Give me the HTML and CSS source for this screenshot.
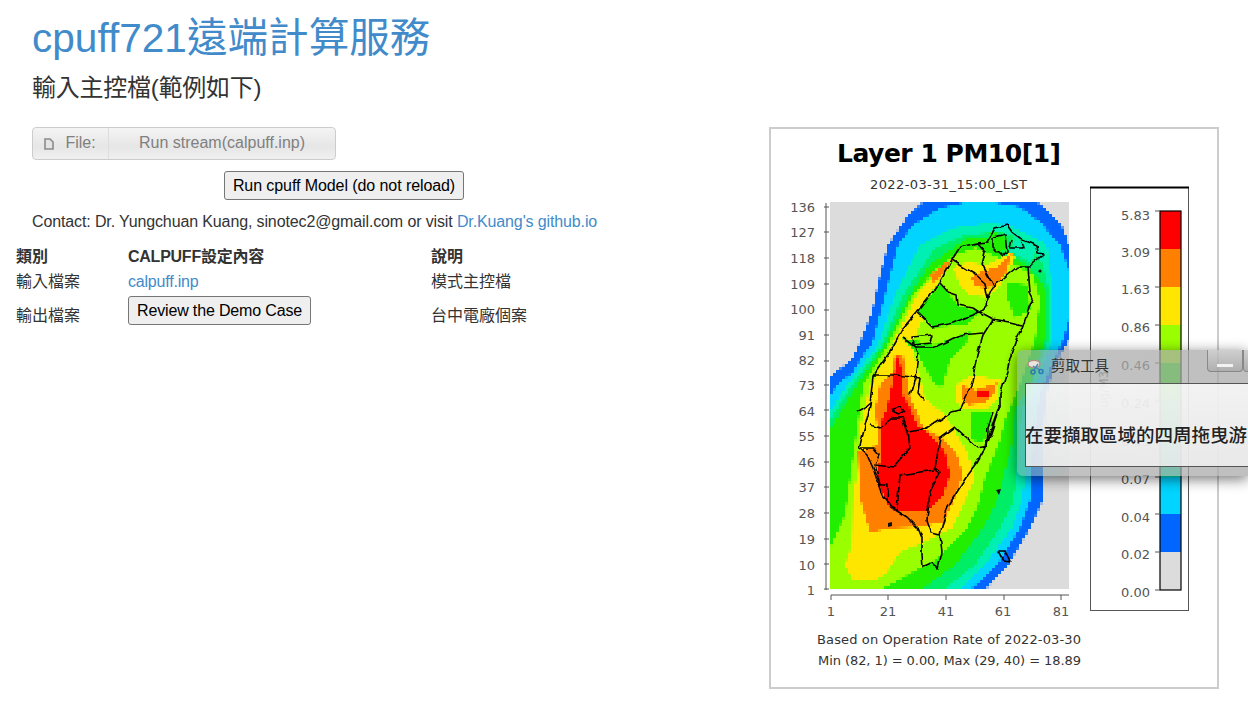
FILE: index.html
```html
<!DOCTYPE html>
<html>

<head>
    <meta charset="utf-8">
    <title>cpuff721遠端計算服務</title>
    <link rel="stylesheet" href="styles.css">
</head>

<body>
    <header class="head">
        <h1>cpuff721遠端計算服務</h1>
        <h2>輸入主控檔(範例如下)</h2>
    </header>

    <main class="content">
        <section class="left">
            <form class="upload">
                <div class="filebox">
                    <span class="filebox-label">
                        <svg class="file-icon" viewBox="0 0 10 12" width="10" height="12">
                            <path d="M1 1h5l3 3v7H1z" fill="#e4e4e4" stroke="#8a8a8a" stroke-width="1.6" />
                        </svg>
                        File:
                    </span>
                    <span class="filebox-name">Run stream(calpuff.inp)</span>
                </div>
                <div class="run-row">
                    <button type="button" class="btn">Run cpuff Model (do not reload)</button>
                </div>
            </form>
            <p class="contact">Contact: Dr. Yungchuan Kuang, sinotec2@gmail.com or visit <a href="#">Dr.Kuang's github.io</a></p>
            <table class="settings">
                <tr>
                    <th class="col-a">類別</th>
                    <th class="col-b">CALPUFF設定內容</th>
                    <th>說明</th>
                </tr>
                <tr>
                    <td>輸入檔案</td>
                    <td><a href="#">calpuff.inp</a></td>
                    <td>模式主控檔</td>
                </tr>
                <tr class="row-btn">
                    <td>輸出檔案</td>
                    <td class="btn-cell"><button type="button" class="btn">Review the Demo Case</button></td>
                    <td>台中電廠個案</td>
                </tr>
            </table>
        </section>

        <figure class="plot">
            <svg class="plot-svg" viewBox="771 129 446 558" width="446" height="558">
                <defs>
                    <!-- samples the bands on the model grid, about 3px a cell -->
                    <filter id="cells" filterUnits="userSpaceOnUse" x="830" y="202" width="239" height="388" color-interpolation-filters="sRGB">
                        <feFlood x="831" y="203" width="1" height="1" />
                        <feComposite x="830" y="202" width="3" height="3" />
                        <feTile x="830" y="202" width="239" height="388" result="grid" />
                        <feComposite in="SourceGraphic" in2="grid" operator="in" />
                        <feMorphology operator="dilate" radius="1" />
                        <feGaussianBlur stdDeviation="0.35" />
                    </filter>
                    <filter id="wiggle" filterUnits="userSpaceOnUse" x="830" y="202" width="239" height="388" color-interpolation-filters="sRGB">
                        <feTurbulence type="fractalNoise" baseFrequency="0.1" numOctaves="2" seed="4" />
                        <feDisplacementMap in="SourceGraphic" scale="5" xChannelSelector="R" yChannelSelector="G" />
                        <feGaussianBlur stdDeviation="0.2" />
                    </filter>
                </defs>

                <text class="t-title" x="837" y="162" textLength="224">Layer 1 PM10[1]</text>
                <text class="t-sub" x="870" y="189" textLength="157">2022-03-31_15:00_LST</text>

                <!-- contour bands, outer to inner -->
                <g class="bands" filter="url(#cells)">
                    <rect x="830" y="202" width="239" height="388" fill="#dcdcdc" />
                    <polygon fill="#0066ff" points="923,202 1037,202 1053,216 1063,228 1069,245 1069,340 1055,365 1046,395 1043,440 1043,478 1042,502 1030,528 1008,565 985,590 830,590 830,377 853,358 863,335 872,312 880,275 888,245 907,217" />
                    <polygon fill="#00d4ff" points="968,202 990,202 1020,207 1040,222 1060,245 1069,270 1069,320 1063,340 1050,368 1040,395 1033,440 1030,478 1030,500 1020,528 997,565 970,590 830,590 830,397 837,385 853,372 863,355 872,345 877,325 885,295 892,268 898,245 913,225 940,208" />
                    <polygon fill="#00f0b4" points="990,223 1010,226 1033,237 1047,245 1053,295 1053,338 1040,375 1030,400 1024,440 1025,478 1022,500 1012,528 985,565 960,590 830,590 830,412 847,385 878,345 895,295 920,245 953,228" />
                    <polygon fill="#00ee66" points="1000,232 1025,240 1042,262 1050,295 1049,338 1035,375 1022,410 1018,440 1017,478 1012,505 1000,528 975,565 943,590 830,590 830,420 852,385 882,345 903,295 935,248 965,235" />
                    <polygon fill="#22ee00" points="1040,280 1047,295 1045,338 1030,385 1015,410 1013,440 1003,478 995,505 983,528 955,565 920,590 830,590 830,430 857,385 885,345 910,295 930,265 950,250 970,237 990,238 1003,255 1022,262" />
                    <polygon fill="#99ff00" points="955,255 975,248 1010,262 1033,275 1040,300 1035,340 1020,385 1005,420 1000,440 985,478 978,505 967,528 935,560 880,590 830,590 830,548 845,515 850,478 857,428 863,385 888,345 913,295 935,270" />
                    <polygon fill="#ffe600" points="947,262 952,260 935,290 922,320 912,345 918,370 925,398 945,415 953,428 967,452 975,478 960,512 952,528 925,542 900,552 887,572 877,580 853,580 845,565 852,545 853,495 858,470 860,428 870,385 892,345 917,295" />
                    <polygon fill="#ffe600" points="953,268 967,262 987,265 1012,252 1015,258 1000,285 987,297 970,295 960,285" />
                    <polygon fill="#ffe600" points="955,385 973,375 1000,380 997,400 985,410 965,410 955,400" />
                    <polygon fill="#ff8000" points="903,355 895,355 892,372 880,385 875,410 877,425 878,445 858,452 860,498 870,532 895,528 917,527 943,522 953,502 963,475 957,455 943,438 923,428 917,412 910,398" />
                    <polygon fill="#ff8000" points="971,278 980,272 997,267 1012,253 1005,275 993,287 983,288 975,285" />
                    <polygon fill="#ff8000" points="962,385 975,390 997,383 993,395 985,403 968,405 962,398" />
                    <polygon fill="#ff8000" points="930,275 947,262 952,260 940,278 933,282" />
                    <polygon fill="#ff0000" points="898,355 892,385 887,408 880,425 880,462 877,472 878,485 890,508 897,511 927,511 943,495 950,475 945,452 930,435 917,425 910,408 903,395 902,372" />
                    <polygon fill="#ff0000" points="976,390 990,390 990,398 978,398" />
                    <!-- green patches over the island -->
                    <polygon fill="#22ee00" points="940,282 958,305 980,312 967,325 933,327 917,312" />
                    <polygon fill="#22ee00" points="903,338 935,345 970,332 968,340 950,360 942,387 935,385 918,355" />
                    <polygon fill="#22ee00" points="1008,283 1028,285 1030,310 1015,318 1008,300" />
                    <polygon fill="#22ee00" points="990,232 1005,235 1008,252 990,248" />
                    <polygon fill="#00f0b4" points="1015,238 1040,248 1030,262 1010,252" />
                    <polygon fill="#22ee00" points="972,413 992,413 990,430 982,442 972,440" />
                </g>

                <!-- coast and county lines -->
                <g class="coast" filter="url(#wiggle)">
                    <polyline points="990,237 995,228 1007,225 1012,232 1020,238 1037,245 1038,253 1044,254 1033,263 1028,268 1030,292 1033,298 1028,310 1022,328 1017,338 1010,358 1007,372 1000,395 1000,405 990,432 983,452 977,463 968,475 957,492 947,508 940,535 942,552 938,569 932,563 923,567 922,555 922,538 918,528 907,517 892,508 882,495 873,468 867,455 859,448 862,438 868,415 870,405 873,375 892,348 903,328 917,312 940,282 953,258 960,247 977,243 987,242 990,237" />
                    <polyline points="952,260 960,265 975,274 985,283 987,295 988,298 993,287 1017,267 1028,267" />
                    <polyline points="982,265 985,252 977,243" />
                    <polyline points="982,265 993,285" />
                    <polyline points="940,283 948,292 957,295 958,305 973,308 979,312" />
                    <polyline points="917,312 933,327 953,323 967,317 980,312 993,319 1010,322 1022,325" />
                    <polyline points="988,297 987,305 980,312" />
                    <polyline points="993,319 983,335 977,355 972,382 967,395 960,410 952,412" />
                    <polyline points="903,338 915,347 935,347 960,335 983,333" />
                    <polyline points="915,347 918,355 915,378 910,395" />
                    <polygon points="912,337 932,335 930,342 913,344" />
                    <polyline points="873,375 897,375 920,378" />
                    <polyline points="870,425 880,428 892,418 903,418 908,432 920,430 935,423 952,412" />
                    <polyline points="940,438 955,427 967,438 977,447 988,445" />
                    <polyline points="940,438 935,468 940,472 930,492 927,520 932,533 940,535" />
                    <polyline points="908,432 910,448 893,467 875,465" />
                    <polyline points="935,470 920,472 900,475 897,510" />
                    <polyline points="860,448 873,448 879,455 875,465 880,485 888,485 887,502 892,508" />
                    <polyline points="993,413 988,428 987,445 996,418 1000,405" />
                    <polyline points="993,238 993,247 1003,257 1007,252 1005,235 998,237 993,238" />
                    <polyline points="1012,240 1010,248 1023,248 1021,241" />
                    <polyline points="920,378 918,392 925,400" />
                    <polygon points="893,408 900,406 904,411 899,414 893,412" />
                    <polyline points="857,412 864,408 870,403" />
                    <polygon points="999,551 1005,551 1010,561 1004,560" />
                </g>
                <g class="isles">
                    <circle cx="1040" cy="271" r="1.6" />
                    <path d="M996 490l5-1-2 6z" />
                    <path d="M888 523l4-1v4l-4 1z" />
                </g>

                <!-- axes -->
                <g class="axis">
                    <path d="M826 203V590M824 207h5M824 232h5M824 258h5M824 284h5M824 310h5M824 335h5M824 361h5M824 385h5M824 410h5M824 436h5M824 462h5M824 487h5M824 513h5M824 539h5M824 564h5M824 589h5" />
                    <path d="M831 595H1069M831 595v5M888 595v5M946 595v5M1004 595v5M1061 595v5" />
                </g>
                <g class="t-left">
                    <text x="815" y="212">136</text>
                    <text x="815" y="237">127</text>
                    <text x="815" y="263">118</text>
                    <text x="815" y="289">109</text>
                    <text x="815" y="314">100</text>
                    <text x="815" y="340">91</text>
                    <text x="815" y="365">82</text>
                    <text x="815" y="390">73</text>
                    <text x="815" y="416">64</text>
                    <text x="815" y="441">55</text>
                    <text x="815" y="467">46</text>
                    <text x="815" y="492">37</text>
                    <text x="815" y="518">28</text>
                    <text x="815" y="544">19</text>
                    <text x="815" y="570">10</text>
                    <text x="815" y="595">1</text>
                </g>
                <g class="t-mid">
                    <text x="831" y="616">1</text>
                    <text x="888" y="616">21</text>
                    <text x="946" y="616">41</text>
                    <text x="1003" y="616">61</text>
                    <text x="1061" y="616">81</text>
                </g>
                <text class="t-foot" x="817" y="644" textLength="264">Based on Operation Rate of 2022-03-30</text>
                <text class="t-foot" x="818" y="665" textLength="263">Min (82, 1) = 0.00, Max (29, 40) = 18.89</text>

                <!-- colour bar -->
                <rect class="legend-box" x="1090.5" y="187.5" width="98" height="423" />
                <path class="legend-top" d="M1090 187.5H1189" />
                <text class="t-unit" transform="translate(1108 408) rotate(-90)">ug/M3</text>
                <g class="bar">
                    <rect x="1160" y="211" width="21" height="38" fill="#ff0000" />
                    <rect x="1160" y="249" width="21" height="38" fill="#ff8000" />
                    <rect x="1160" y="287" width="21" height="38" fill="#ffe600" />
                    <rect x="1160" y="325" width="21" height="38" fill="#99ff00" />
                    <rect x="1160" y="363" width="21" height="38" fill="#22ee00" />
                    <rect x="1160" y="401" width="21" height="38" fill="#00ee66" />
                    <rect x="1160" y="439" width="21" height="38" fill="#00f0b4" />
                    <rect x="1160" y="477" width="21" height="37" fill="#00d4ff" />
                    <rect x="1160" y="514" width="21" height="38" fill="#0066ff" />
                    <rect x="1160" y="552" width="21" height="38" fill="#dcdcdc" />
                </g>
                <rect class="bar-line" x="1160" y="211" width="21" height="379" />
                <g class="axis">
                    <path d="M1155 211h5M1155 249h5M1155 287h5M1155 325h5M1155 363h5M1155 401h5M1155 439h5M1155 477h5M1155 514h5M1155 552h5M1155 590h5" />
                </g>
                <g class="t-bar">
                    <text x="1150" y="220">5.83</text>
                    <text x="1150" y="257">3.09</text>
                    <text x="1150" y="294">1.63</text>
                    <text x="1150" y="332">0.86</text>
                    <text x="1150" y="370">0.46</text>
                    <text x="1150" y="408">0.24</text>
                    <text x="1150" y="446">0.13</text>
                    <text x="1150" y="484">0.07</text>
                    <text x="1150" y="522">0.04</text>
                    <text x="1150" y="559">0.02</text>
                    <text x="1150" y="597">0.00</text>
                </g>
            </svg>
        </figure>
    </main>

    <!-- snipping tool window caught in the screenshot -->
    <div class="snip">
        <div class="snip-title">
            <svg class="snip-icon" viewBox="0 0 18 16" width="18" height="16">
                <ellipse cx="7" cy="5" rx="6" ry="3.6" fill="#e8e4de" stroke="#b98a80" stroke-width="1.4" />
                <path d="M6 7l7 4M11 5l-4 6" stroke="#4a86b8" stroke-width="1.4" />
                <circle cx="6" cy="13" r="2" fill="none" stroke="#2f77b5" stroke-width="1.5" />
                <circle cx="14" cy="12.5" r="2" fill="none" stroke="#2f77b5" stroke-width="1.5" />
            </svg>
            <span>剪取工具</span>
            <span class="snip-min"></span>
            <span class="snip-max"></span>
        </div>
        <div class="snip-body">在要擷取區域的四周拖曳游</div>
    </div>
</body>

</html>
```

FILE: styles.css
```css
html, body {
    margin: 0;
    height: 100%;
    overflow: hidden;
}

body {
    font-family: "Liberation Sans", "Noto Sans CJK TC", sans-serif;
    font-size: 16px;
    line-height: 1.43;
    color: #333;
    background: #fff;
}

a {
    color: #428bca;
    text-decoration: none;
}

.head {
    padding: 0 32px;
    height: 127px;
}

h1 {
    margin: 0;
    padding-top: 15px;
    font-size: 40.6px;
    font-weight: 400;
    line-height: 47px;
    color: #428bca;
}

h2 {
    margin: 0;
    padding-top: 10px;
    font-size: 24px;
    font-weight: 400;
    line-height: 32px;
    letter-spacing: -0.25px;
    color: #333;
}

.content {
    display: flex;
}

.left {
    flex: 0 0 769px;
}

.upload {
    margin-left: 32px;
    width: 624px;
}

.filebox {
    display: flex;
    width: 302px;
    height: 31px;
    border: 1px solid #ccc;
    border-radius: 4px;
    color: #808080;
    line-height: 29px;
    background: linear-gradient(#f4f4f4, #e6e6e6 60%, #f0f0f0);
}

.filebox-label {
    width: 76px;
    box-sizing: border-box;
    padding-left: 11px;
    border-right: 1px solid #ddd;
    white-space: nowrap;
}

.file-icon {
    margin-right: 7px;
    vertical-align: -2px;
}

.filebox-name {
    flex: 1;
    text-align: center;
}

.run-row {
    margin-top: 11px;
    text-align: center;
}

.btn {
    font-family: "Liberation Sans", "Noto Sans CJK TC", sans-serif;
    font-size: 16px;
    letter-spacing: -0.08px;
    height: 29px;
    padding: 0 8px;
    color: #000;
    background: #efefef;
    border: 1px solid #767676;
    border-radius: 3px;
}

.contact {
    margin: 10px 0 0 32px;
    line-height: 23px;
    letter-spacing: -0.125px;
}

.settings {
    margin: 11px 0 0 16px;
    border-collapse: collapse;
}

.settings th,
.settings td {
    padding: 0;
    text-align: left;
    line-height: 25px;
    vertical-align: middle;
}

.settings a {
    letter-spacing: -0.2px;
}

.settings .btn {
    letter-spacing: -0.15px;
}

.col-a {
    width: 112px;
}

.settings .col-b {
    width: 303px;
    letter-spacing: -0.25px;
}

.row-btn td {
    height: 38px;
    padding-top: 2px;
}

.settings .btn-cell {
    vertical-align: top;
    padding-top: 2px;
}

.plot {
    margin: 0;
    width: 446px;
    height: 558px;
    border: 2px solid #ccc;
}

.plot-svg {
    display: block;
}

.plot-svg text {
    font-family: "DejaVu Sans", sans-serif;
}

.t-title {
    font-size: 25px;
    font-weight: 700;
    fill: #000;
}

.t-sub {
    font-size: 13px;
    fill: #333;
}

.coast polyline,
.coast polygon {
    fill: none;
    stroke: #000;
    stroke-width: 1.6;
    stroke-linejoin: round;
}

.isles {
    fill: #111;
}

.axis path {
    fill: none;
    stroke: #555;
    stroke-width: 1;
}

.t-left text,
.t-bar text {
    text-anchor: end;
    font-size: 13px;
    fill: #555;
}

.t-mid text {
    text-anchor: middle;
    font-size: 13px;
    fill: #555;
}

.t-foot {
    font-size: 13px;
    fill: #333;
}

.t-unit {
    font-size: 12px;
    fill: #777;
}

.legend-box {
    fill: none;
    stroke: #555;
    stroke-width: 1;
}

.legend-top {
    stroke: #000;
    stroke-width: 2;
}

.bar-line {
    fill: none;
    stroke: #000;
    stroke-width: 1.2;
}

.snip {
    position: absolute;
    left: 1017px;
    right: 0;
    top: 350px;
    height: 126px;
    box-sizing: border-box;
    padding: 0 0 9px 8px;
    border-radius: 6px 0 0 6px;
    background: linear-gradient(90deg, rgba(120, 170, 170, 0.6), rgba(170, 170, 170, 0.72) 22%, rgba(170, 170, 170, 0.75));
    box-shadow: 0 3px 14px rgba(0, 0, 0, 0.55);
    display: flex;
    flex-direction: column;
    overflow: hidden;
}

.snip-title {
    display: flex;
    align-items: center;
    height: 33px;
    flex: none;
    font-size: 14.5px;
    color: #333;
    margin-left: 2px;
}

.snip-icon {
    margin-right: 6px;
    flex: none;
}

.snip-min,
.snip-max {
    position: absolute;
    left: 190px;
    top: 0;
    width: 36px;
    height: 22px;
    box-sizing: border-box;
    border: 1px solid #888;
    border-top: none;
    border-radius: 0 0 4px 4px;
    background: linear-gradient(rgba(230, 230, 230, 0.4), rgba(150, 150, 150, 0.4));
}

.snip-max {
    left: 226px;
}

.snip-min::after {
    content: "";
    position: absolute;
    left: 9px;
    bottom: 4px;
    width: 16px;
    height: 3px;
    background: #f2f2f2;
}

.snip-body {
    flex: 1;
    box-sizing: border-box;
    padding-top: 43px;
    border: 1px solid #555;
    border-right: none;
    font-size: 18.5px;
    font-weight: 500;
    line-height: 1;
    text-indent: -1px;
    color: #222;
    white-space: nowrap;
    background: linear-gradient(rgba(255, 255, 255, 0.8), rgba(240, 240, 240, 0.85));
}
```
